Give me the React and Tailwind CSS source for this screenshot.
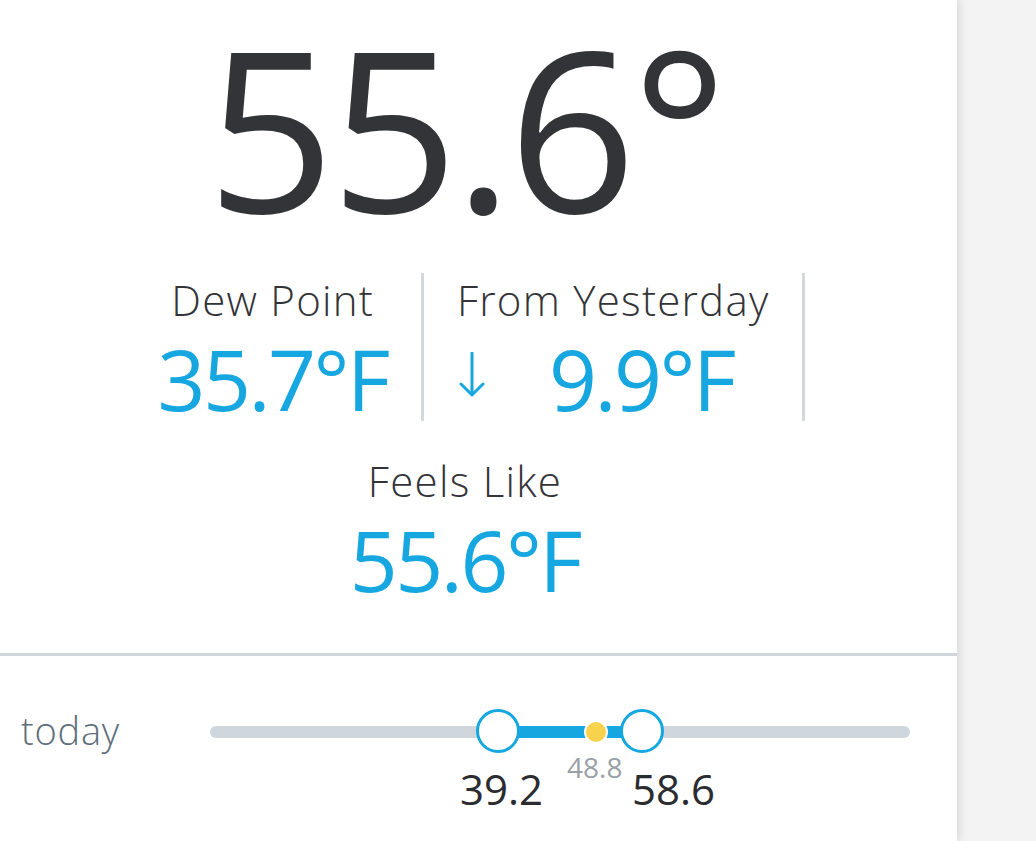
import React from "react"

const font = { fontFamily: '"Open Sans", "Noto Sans", sans-serif' }

function DownArrow() {
  return (
    <svg width="26" height="46" viewBox="0 0 26 46" className="self-start mt-[18px] mr-[64px] shrink-0">
      <path d="M13 1v42M2 32l11 11 11-11" fill="none" stroke="#16a7e1" strokeWidth="3" strokeLinecap="round" strokeLinejoin="round" />
    </svg>
  )
}

function Stat({ label, value, arrow, border }) {
  return (
    <div
      className={`flex flex-col items-center h-[148px] px-[33px] ${
        border ? "border-r-[3px] border-[#d3d8dd]" : ""
      }`}
    >
      <div className="text-[42px] leading-[48px] font-light text-[#333438] mt-[3px] tracking-[0.03em] whitespace-nowrap">
        {label}
      </div>
      <div
        className={`flex mt-[10px] text-[84px] leading-[90px] text-[#16a7e1] tracking-[-0.03em] whitespace-nowrap ${
          arrow ? "self-start pl-[2px]" : ""
        }`}
      >
        {arrow && <DownArrow />}
        <span>{value}</span>
      </div>
    </div>
  )
}

export default function App() {
  return (
    <div className="min-h-screen bg-[#f3f3f3] flex" style={font}>
      <div className="w-[957px] min-h-screen bg-white shadow-[3px_0_8px_rgba(0,0,0,0.10)] flex flex-col">
        <div className="pr-[27px] flex flex-col items-center">
          <div className="text-[224px] leading-[224px] text-[#333438] tracking-[-0.02em] mt-[15px]">
            55.6°
          </div>

          <div className="flex flex-wrap justify-center gap-y-[33px] mt-[34px]">
            <Stat label="Dew Point" value="35.7°F" border />
            <Stat label="From Yesterday" value="9.9°F" arrow border />
            <div className="basis-full flex justify-center">
              <Stat label="Feels Like" value="55.6°F" />
            </div>
          </div>
        </div>

        <div className="mt-[51px] border-t-[3px] border-[#cfd5da]" />

        <div className="flex items-start pt-[48px]">
          <div className="w-[210px] pl-[21px] text-[38px] leading-[52px] font-light text-[#5f6e7b] tracking-[0.02em]">
            today
          </div>
          <div className="relative w-[700px] h-[110px] mt-[2px]">
            <div className="absolute left-0 right-0 top-[20px] h-[12px] rounded-full bg-[#cfd6dc]" />
            <div className="absolute left-[287px] w-[145px] top-[20px] h-[12px] bg-[#16a7e1]" />
            <div className="absolute left-[266px] top-[3px] w-[44px] h-[44px] rounded-full bg-white border-[3px] border-[#16a7e1]" />
            <div className="absolute left-[410px] top-[3px] w-[44px] h-[44px] rounded-full bg-white border-[3px] border-[#16a7e1]" />
            <div className="absolute left-[374px] top-[14px] w-[24px] h-[24px] rounded-full bg-[#f7d24c] border-2 border-white" />
            <div className="absolute left-[357px] top-[43px] text-[28px] leading-[36px] text-[#9aa0a6]">
              48.8
            </div>
            <div className="absolute left-[250px] top-[59px] text-[42px] leading-[48px] text-[#2b2c30]">
              39.2
            </div>
            <div className="absolute left-[422px] top-[59px] text-[42px] leading-[48px] text-[#2b2c30]">
              58.6
            </div>
          </div>
        </div>
      </div>
    </div>
  )
}
